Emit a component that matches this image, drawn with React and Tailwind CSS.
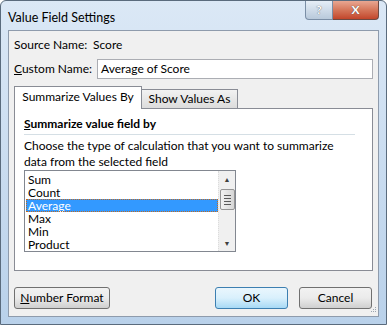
import { useState } from 'react'

const ITEMS = ['Sum', 'Count', 'Average', 'Max', 'Min', 'Product']

function Btn({ children, className = '', primary }) {
  return (
    <button
      className={`h-[22px] shrink-0 whitespace-nowrap rounded-[3px] border text-black ${
        primary
          ? 'border-[#3c7fb1] bg-gradient-to-b from-[#eaf6fd] via-[#d9f0fc] to-[#a7d9f5]'
          : 'border-[#707070] bg-gradient-to-b from-[#f2f2f2] via-[#ebebeb] to-[#cfcfcf]'
      } ${className}`}
    >
      {children}
    </button>
  )
}

function ListBox() {
  const [sel, setSel] = useState(2)
  return (
    <div className="flex w-[212px] h-[82px] border border-[#828790] bg-white">
      <div className="flex-1 pt-[2px] pl-[1px]">
        {ITEMS.map((it, i) => (
          <div
            key={it}
            onClick={() => setSel(i)}
            className={`h-[13px] leading-[13px] pl-[2px] whitespace-nowrap ${
              i === sel ? 'bg-[#3399ff] text-white outline-1 outline-dotted outline-[#c26a1f] -outline-offset-1' : 'text-black'
            }`}
          >
            {it}
          </div>
        ))}
      </div>
      <div className="w-[17px] flex flex-col items-center bg-[#f0f0f0] border-l border-dotted border-[#dcdcdc]">
        <div className="h-[16px] flex items-center justify-center text-[7px] text-[#404040]">▲</div>
        <div className="w-[15px] h-[21px] mt-[2px] rounded-[2px] border border-[#959595] bg-gradient-to-r from-[#f2f2f2] to-[#d6d6d6] flex flex-col items-center justify-center gap-[2px]">
          <div className="w-[7px] h-px bg-[#5a5a5a]" />
          <div className="w-[7px] h-px bg-[#5a5a5a]" />
          <div className="w-[7px] h-px bg-[#5a5a5a]" />
          <div className="w-[7px] h-px bg-[#5a5a5a]" />
        </div>
        <div className="flex-1" />
        <div className="h-[16px] flex items-center justify-center text-[7px] text-[#404040]">▼</div>
      </div>
    </div>
  )
}

export default function App() {
  return (
    <div
      className="w-[387px] h-[325px] flex flex-col bg-gradient-to-b from-[#dbe8f6] to-[#b9d1ea] border border-[#5a6b7d] rounded-t-[6px] overflow-hidden text-[12px]"
      style={{ fontFamily: 'Lato, "Noto Sans", sans-serif' }}
    >
      {/* Title bar */}
      <div className="h-[29px] flex items-start shrink-0">
        <div className="pl-[7px] pt-[8px] text-[12.5px] text-black">Value Field Settings</div>
        <div className="ml-auto mr-[7px] flex">
          <div className="w-[28px] h-[19px] border border-[#7a8ea6] border-t-0 rounded-bl-[4px] bg-gradient-to-b from-[#e6eef7] to-[#b8c9db] flex items-center justify-center text-[12px] font-bold text-white [text-shadow:0_0_1px_#333]">
            ?
          </div>
          <div className="w-[46px] h-[19px] border border-[#6d4a43] border-t-0 border-l-0 rounded-br-[4px] bg-gradient-to-b from-[#e8a792] via-[#d5765a] to-[#c2452a] flex items-center justify-center text-[12px] font-bold text-white [text-shadow:0_0_1px_#333]">
            X
          </div>
        </div>
      </div>

      {/* Content */}
      <div className="flex-1 mx-[7px] mb-[7px] border border-[#8e9bac] bg-[#f0f0f0] flex flex-col px-[5px] text-black">
        <div className="flex items-center h-[26px] mt-[1px] whitespace-nowrap">
          <span className="w-[79px] shrink-0">Source Name:</span>
          <span>Score</span>
        </div>
        <div className="flex items-center mt-[1px] whitespace-nowrap">
          <span className="w-[83px] shrink-0"><u>C</u>ustom Name:</span>
          <div className="w-[276px] shrink-0 h-[20px] border border-[#abadb3] bg-white flex items-center pl-[3px]">Average of Score</div>
        </div>

        {/* Tabs */}
        <div className="flex items-end mt-[7px] relative z-10 whitespace-nowrap">
          <div className="w-[128px] h-[23px] bg-white border border-b-0 border-[#898c95] flex items-center justify-center pb-[2px]">
            Summarize Values By
          </div>
          <div className="w-[96px] h-[19px] mb-px bg-gradient-to-b from-[#f2f2f2] to-[#dcdcdc] border border-l-0 border-b-0 border-[#898c95] flex items-center justify-center">
            Show Values As
          </div>
        </div>
        <div className="h-[163px] shrink-0 -mt-px bg-white border border-[#898c95] px-[9px] flex flex-col">
          <div className="font-bold mt-[7px] leading-[16px] whitespace-nowrap"><u>S</u>ummarize value field by</div>
          <div className="h-px bg-[#d5dfe5] mt-[2px] mr-[8px]" />
          <div className="mt-[3px] leading-[16px] whitespace-nowrap">
            Choose the type of calculation that you want to summarize
            <br />
            data from the selected field
          </div>
          <ListBox />
        </div>

        {/* Buttons */}
        <div className="flex mt-[16px] shrink-0">
          <Btn className="w-[96px]"><u>N</u>umber Format</Btn>
          <Btn primary className="w-[73px] ml-auto">OK</Btn>
          <Btn className="w-[73px] ml-[11px] mr-[1px]">Cancel</Btn>
        </div>
        <div className="flex-1 relative">
          <svg className="absolute right-[-4px] bottom-[1px]" width="10" height="10" viewBox="0 0 10 10">
            <g fill="#9aa4b0">
              <rect x="8" y="2" width="1" height="1" />
              <rect x="6" y="4" width="1" height="1" />
              <rect x="8" y="4" width="1" height="1" />
              <rect x="4" y="6" width="1" height="1" />
              <rect x="6" y="6" width="1" height="1" />
              <rect x="8" y="6" width="1" height="1" />
            </g>
          </svg>
        </div>
      </div>
    </div>
  )
}
